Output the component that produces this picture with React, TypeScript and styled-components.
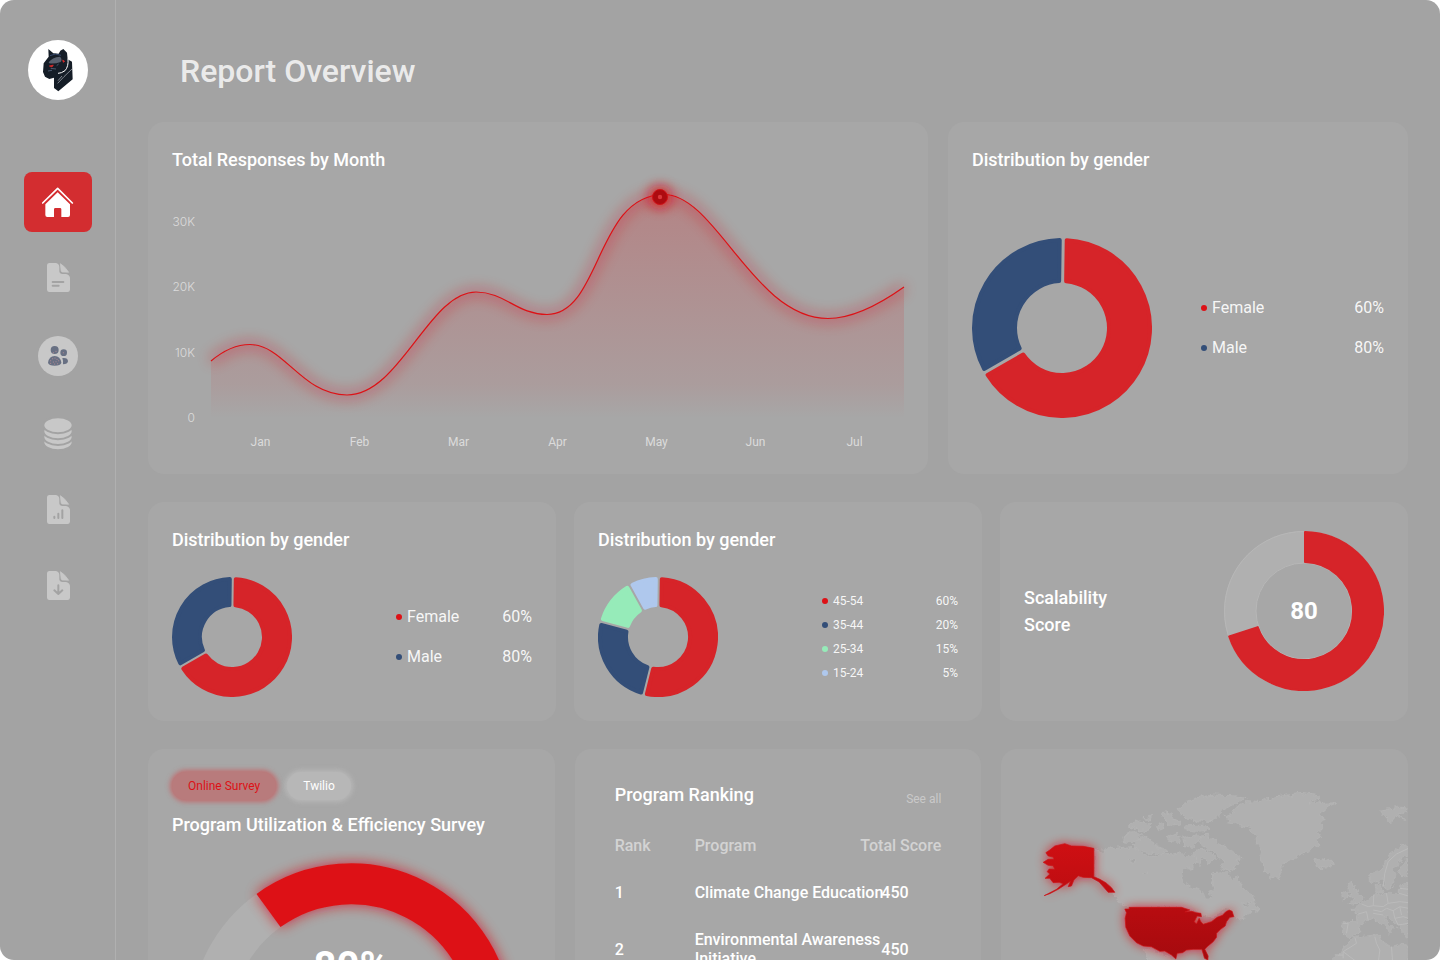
import React from "react";
import styled, { createGlobalStyle, css } from "styled-components";

const colors = {
  page: "#a3a3a3",
  card: "#a7a7a7",
  line: "#b0b0b0",
  icon: "#c8c8c8",
  red: "#d62429",
  hotRed: "#dd1116",
  blue: "#334e78",
  green: "#96ebb9",
  sky: "#afc8ed",
};

const GlobalStyle = createGlobalStyle`
  *, *::before, *::after { box-sizing: border-box; }
  body {
    margin: 0;
    background: #ffffff;
    font-family: Roboto, "Liberation Sans", sans-serif;
    color: #ffffff;
  }
`;

/* ---------- page frame ---------- */

const Frame = styled.div`
  display: flex;
  height: 100vh;
  overflow: hidden;
  border-radius: 14px;
  background: ${colors.page};
`;

const Sidebar = styled.aside`
  flex: none;
  width: 116px;
  padding: 40px 23px 40px 24px;
  display: flex;
  flex-direction: column;
  align-items: center;
  gap: 72px;
  border-right: 1px solid ${colors.line};
`;

const Logo = styled.a`
  display: block;
  width: 60px;
  height: 60px;
  border-radius: 50%;
  background: #ffffff;
  svg {
    display: block;
  }
`;

const Nav = styled.nav`
  display: flex;
  flex-direction: column;
  gap: 16px;
`;

const NavButton = styled.button<{ $active?: boolean; $tall?: boolean }>`
  display: flex;
  align-items: center;
  justify-content: center;
  width: 68px;
  height: ${(p) => (p.$tall ? 64 : 60)}px;
  padding: 0;
  border: 0;
  border-radius: 8px;
  background: ${(p) => (p.$active ? "#d32d30" : "transparent")};
  cursor: pointer;
`;

const Avatar = styled.span`
  display: flex;
  align-items: center;
  justify-content: center;
  width: 40px;
  height: 40px;
  border-radius: 50%;
  background: ${colors.icon};
`;

const Main = styled.main`
  flex: 1;
  min-width: 0;
  padding: 52px 32px 0;
`;

const PageTitle = styled.h1`
  margin: 0 0 32px;
  padding-left: 32px;
  font-size: 32px;
  line-height: 38px;
  font-weight: 500;
  color: rgba(255, 255, 255, 0.8);
`;

const Row = styled.div<{ $columns: string; $gap: number }>`
  display: grid;
  grid-template-columns: ${(p) => p.$columns};
  gap: ${(p) => p.$gap}px;
  margin-bottom: 28px;
`;

const Card = styled.section<{ $pad?: string }>`
  display: flex;
  flex-direction: column;
  min-width: 0;
  padding: ${(p) => p.$pad ?? "24px"};
  border-radius: 16px;
  background: ${colors.card};
`;

const CardTitle = styled.h2`
  margin: 0;
  font-size: 18px;
  line-height: 28px;
  font-weight: 500;
`;

/* ---------- line chart ---------- */

const ChartGrid = styled.div`
  display: grid;
  grid-template-columns: 23px 1fr;
  column-gap: 16px;
  margin-top: 4px;
`;

const AxisY = styled.div`
  display: flex;
  flex-direction: column;
  justify-content: space-between;
  height: 212px;
  margin-top: 36px;
  text-align: right;
  font-family: Inter, Roboto, sans-serif;
  font-size: 12px;
  line-height: 16px;
  font-weight: 300;
  color: rgba(255, 255, 255, 0.6);
`;

const Plot = styled.svg`
  display: block;
  width: 100%;
  height: 240px;
  overflow: visible;
`;

const AxisX = styled.div`
  grid-column: 2;
  display: grid;
  grid-template-columns: repeat(7, 1fr);
  margin-top: 8px;
  text-align: center;
  font-size: 12px;
  line-height: 16px;
  color: rgba(255, 255, 255, 0.6);
`;

const curve =
  "M211 361 C224 350 236 344.500 250 344.500 C284 344.500 302 395 347 395 C400 395 429 292 476 292 C505 292 517 314.500 547 314.500 C601 314.500 596 194.500 664 194.500 C716 194.500 754 318.500 828 318.500 C852 318.500 880 304 904 287";

function ResponsesChart() {
  return (
    <ChartGrid>
      <AxisY>
        {["30K", "20K", "10K", "0"].map((v) => (
          <span key={v}>{v}</span>
        ))}
      </AxisY>
      <Plot viewBox="211 178 693 240" preserveAspectRatio="none" aria-hidden="true">
        <defs>
          <linearGradient id="area" gradientUnits="userSpaceOnUse" x1="0" y1="195" x2="0" y2="418">
            <stop offset="0" stopColor={colors.hotRed} stopOpacity="0.23" />
            <stop offset="0.85" stopColor={colors.hotRed} stopOpacity="0.07" />
            <stop offset="1" stopColor={colors.hotRed} stopOpacity="0" />
          </linearGradient>
          <filter id="lineGlow" filterUnits="userSpaceOnUse" x="180" y="150" width="760" height="290">
            <feGaussianBlur stdDeviation="7" />
          </filter>
          <filter id="dotGlow" filterUnits="userSpaceOnUse" x="620" y="155" width="80" height="80">
            <feGaussianBlur stdDeviation="6" />
          </filter>
        </defs>
        <path d={`${curve} V418 H211Z`} fill="url(#area)" />
        <path d={curve} fill="none" stroke={colors.hotRed} strokeWidth="8" opacity="0.35" filter="url(#lineGlow)" />
        <path d={curve} fill="none" stroke={colors.hotRed} strokeWidth="1.2" />
        <circle cx="660" cy="197" r="12" fill={colors.hotRed} opacity="0.7" filter="url(#dotGlow)" />
        <circle cx="660" cy="197" r="7.5" fill="#ad0b10" stroke="#cf1318" />
        <circle cx="660" cy="197" r="2.2" fill="#d9383b" />
      </Plot>
      <AxisX>
        {["Jan", "Feb", "Mar", "Apr", "May", "Jun", "Jul"].map((m) => (
          <span key={m}>{m}</span>
        ))}
      </AxisX>
    </ChartGrid>
  );
}

/* ---------- donut charts ---------- */

type Slice = { from: number; to: number; color: string };

function slicePath(c: number, outer: number, inner: number, s: Slice, gap: number, round: number) {
  const ro = outer - round;
  const ri = inner + round;
  const pad = gap / 2 + round;
  const point = (r: number, deg: number, side: number) => {
    const a = (deg * Math.PI) / 180 + side * Math.asin(pad / r);
    return `${(c + r * Math.sin(a)).toFixed(2)} ${(c - r * Math.cos(a)).toFixed(2)}`;
  };
  const large = s.to - s.from > 180 ? 1 : 0;
  return `M${point(ro, s.from, 1)} A${ro} ${ro} 0 ${large} 1 ${point(ro, s.to, -1)} L${point(ri, s.to, -1)} A${ri} ${ri} 0 ${large} 0 ${point(ri, s.from, 1)}Z`;
}

const DonutSvg = styled.svg`
  flex: none;
  display: block;
`;

function Donut(props: { size: number; hole: number; gap: number; slices: Slice[]; round?: number; track?: boolean }) {
  const { size, hole, gap, slices, round = 2, track } = props;
  const c = size / 2;
  return (
    <DonutSvg width={size} height={size} viewBox={`0 0 ${size} ${size}`} aria-hidden="true">
      {track && (
        <g fill="none">
          <circle cx={c} cy={c} r={(c + hole) / 2} stroke="#b0b0b0" strokeWidth={c - hole} />
          <circle cx={c} cy={c} r={c - 0.5} stroke="#b7b7b7" />
          <circle cx={c} cy={c} r={hole} stroke="#b7b7b7" />
        </g>
      )}
      {slices.map((s) => (
        <path
          key={s.from}
          d={slicePath(c, c, hole, s, gap, round)}
          fill={s.color}
          stroke={s.color}
          strokeWidth={round * 2}
          strokeLinejoin="round"
        />
      ))}
    </DonutSvg>
  );
}

const genderSlices: Slice[] = [
  { from: 0.8, to: 240, color: colors.red },
  { from: 240, to: 360.8, color: colors.blue },
];

const ageSlices: Slice[] = [
  { from: 0.8, to: 194, color: colors.red },
  { from: 194, to: 285, color: colors.blue },
  { from: 285, to: 331, color: colors.green },
  { from: 331, to: 360.8, color: colors.sky },
];

const ChartBody = styled.div<{ $top: number }>`
  display: flex;
  align-items: center;
  justify-content: space-between;
  margin-top: ${(p) => p.$top}px;
`;

const LegendList = styled.ul<{ $width: number; $small?: boolean }>`
  flex: none;
  width: ${(p) => p.$width}px;
  margin: 0;
  padding: 0;
  list-style: none;
  display: flex;
  flex-direction: column;
  gap: ${(p) => (p.$small ? 8 : 20)}px;
  font-size: ${(p) => (p.$small ? 12 : 16)}px;
  line-height: ${(p) => (p.$small ? 16 : 20)}px;
  color: rgba(255, 255, 255, 0.92);
`;

const LegendItem = styled.li<{ $color: string }>`
  display: flex;
  align-items: center;
  &::before {
    content: "";
    width: 6px;
    height: 6px;
    margin: 0 5px 0 1px;
    border-radius: 50%;
    background: ${(p) => p.$color};
  }
`;

const LegendValue = styled.span`
  margin-left: auto;
`;

function Legend({ width, small, items }: { width: number; small?: boolean; items: [string, string, string][] }) {
  return (
    <LegendList $width={width} $small={small}>
      {items.map(([label, value, color]) => (
        <LegendItem key={label} $color={color}>
          {label}
          <LegendValue>{value}</LegendValue>
        </LegendItem>
      ))}
    </LegendList>
  );
}

const genderItems: [string, string, string][] = [
  ["Female", "60%", colors.hotRed],
  ["Male", "80%", colors.blue],
];

const ageItems: [string, string, string][] = [
  ["45-54", "60%", colors.hotRed],
  ["35-44", "20%", colors.blue],
  ["25-34", "15%", colors.green],
  ["15-24", "5%", colors.sky],
];

/* ---------- score ---------- */

const ScoreBody = styled.div`
  flex: 1;
  display: flex;
  align-items: center;
  justify-content: space-between;
  padding-bottom: 1px;
`;

const ScoreTitle = styled.h2`
  width: 100px;
  margin: 0;
  font-size: 18px;
  line-height: 27px;
  font-weight: 500;
`;

const Stack = styled.div`
  display: grid;
  place-items: center;
  > * {
    grid-area: 1 / 1;
  }
`;

const ScoreValue = styled.strong`
  font-size: 24px;
  line-height: 28px;
  font-weight: 700;
`;

/* ---------- survey gauge ---------- */

const Chips = styled.div`
  display: flex;
  gap: 11px;
  margin-bottom: 11px;
`;

const Chip = styled.button<{ $active?: boolean }>`
  height: 28px;
  padding: 0 16px;
  border: 0;
  border-radius: 14px;
  font: 400 12px/16px Roboto, sans-serif;
  cursor: pointer;
  ${(p) =>
    p.$active
      ? css`
          color: ${colors.hotRed};
          background: #b87b7c;
          box-shadow: 0 0 5px 2px rgba(200, 90, 92, 0.75);
        `
      : css`
          color: #ffffff;
          background: #b7b7b7;
          box-shadow: 0 0 5px 2px rgba(188, 188, 188, 0.8);
        `}
`;

const GaugeBox = styled(Stack)`
  margin-top: 3px;
  align-items: start;
`;

const GaugeSvg = styled.svg`
  display: block;
  overflow: visible;
`;

const GaugeValue = styled.strong`
  margin-top: 101px;
  font-size: 40px;
  line-height: 48px;
  font-weight: 700;
`;

function Gauge() {
  return (
    <GaugeBox>
      <GaugeSvg width="358" height="200" viewBox="1 0 358 200" aria-hidden="true">
        <defs>
          <filter id="gaugeGlow" filterUnits="userSpaceOnUse" x="0" y="8" width="360" height="220">
            <feGaussianBlur stdDeviation="7" />
          </filter>
        </defs>
        <g fill="none" strokeWidth="41">
          <path d="M39 182.500 A141 141 0 0 1 97.500 68.500" stroke="#b0b0b0" />
          <path d="M97.500 68.500 A141 141 0 0 1 321 182.500" stroke={colors.hotRed} opacity="0.75" filter="url(#gaugeGlow)" />
          <path d="M97.500 68.500 A141 141 0 0 1 321 182.500" stroke={colors.hotRed} />
        </g>
      </GaugeSvg>
      <GaugeValue>80%</GaugeValue>
    </GaugeBox>
  );
}

/* ---------- ranking ---------- */

const RankingHead = styled.div`
  display: flex;
  align-items: flex-end;
  justify-content: space-between;
`;

const SeeAll = styled.a`
  font-size: 12px;
  line-height: 20px;
  color: rgba(255, 255, 255, 0.4);
  text-decoration: none;
`;

const Table = styled.table`
  width: 100%;
  margin-top: 13px;
  table-layout: fixed;
  border-collapse: collapse;
  font-size: 16px;
  line-height: 19px;
  font-weight: 500;
  th,
  td {
    padding: 14px 0;
    text-align: left;
    white-space: nowrap;
    font-weight: 500;
  }
  th {
    color: rgba(255, 255, 255, 0.5);
  }
  td:last-child {
    padding-left: 21px;
  }
`;

const ColHead = styled.th<{ $width?: number }>`
  width: ${(p) => (p.$width ? `${p.$width}px` : "auto")};
`;

const programs: { name: string[]; score: number }[] = [
  { name: ["Climate Change Education"], score: 450 },
  { name: ["Environmental Awareness", "Initiative"], score: 450 },
];

function Ranking() {
  return (
    <Card $pad="32px 40px 24px">
      <RankingHead>
        <CardTitle>Program Ranking</CardTitle>
        <SeeAll href="#all">See all</SeeAll>
      </RankingHead>
      <Table>
        <thead>
          <tr>
            <ColHead $width={80}>Rank</ColHead>
            <ColHead>Program</ColHead>
            <ColHead $width={81}>Total Score</ColHead>
          </tr>
        </thead>
        <tbody>
          {programs.map((p, i) => (
            <tr key={p.name[0]}>
              <td>{i + 1}</td>
              <td>
                {p.name.map((line, n) => (
                  <React.Fragment key={line}>
                    {n > 0 && <br />}
                    {line}
                  </React.Fragment>
                ))}
              </td>
              <td>{p.score}</td>
            </tr>
          ))}
        </tbody>
      </Table>
    </Card>
  );
}

/* ---------- map ---------- */

const MapSvg = styled.svg`
  display: block;
  width: 100%;
  height: 300px;
`;

const land = [
  // Canada mainland
  "M287 330 L300 336 330 325 355 320 375 325 400 322 420 334 440 345 470 350 490 342 520 345 545 338 555 350 575 342 585 352 590 365 580 380 555 388 543 400 548 425 575 440 610 455 615 475 625 485 635 472 632 455 645 445 638 420 638 400 660 395 680 398 700 420 710 410 725 440 740 455 762 468 765 485 740 490 725 492 735 500 750 495 762 488 765 498 780 512 755 515 735 530 715 535 705 525 695 510 680 505 655 522 630 530 605 520 590 515 560 505 545 500 H375 L360 490 345 465 335 450 320 425 300 415 285 408Z",
  // Arctic islands
  "M600 285 L622 283 632 292 650 298 655 312 680 320 700 335 730 355 712 362 715 372 700 380 712 390 690 396 670 385 655 375 675 368 660 355 650 345 630 330 610 320 600 300Z",
  "M410 305 L430 290 450 296 462 315 490 322 505 335 490 344 450 340 418 330 400 318Z",
  "M375 285 L400 275 425 282 415 300 395 308 370 305Z",
  "M385 255 L410 240 425 246 450 250 457 262 440 272 405 268Z",
  "M430 236 L458 226 455 240Z",
  "M483 222 L510 216 515 232 545 245 540 255 515 258 495 240Z",
  "M470 260 L480 245 492 265 476 272Z",
  "M535 205 L560 185 600 172 640 165 700 167 735 175 705 193 670 208 655 225 640 245 600 243 570 240 545 225Z",
  "M555 258 L610 255 630 262 618 272 590 274 560 270Z",
  "M505 292 L530 280 540 300 520 310Z",
  "M548 292 L575 285 600 290 595 305 575 325 555 320Z",
  "M580 340 L600 325 625 335 650 355 630 368 610 350 600 380 590 366Z",
  // Greenland
  "M670 232 L700 222 695 210 745 182 780 185 800 178 830 170 865 165 900 160 950 165 957 178 925 185 965 190 1010 188 985 198 965 215 970 240 960 250 975 262 955 275 965 290 950 300 958 318 940 325 900 345 850 370 835 415 815 412 795 390 778 350 785 330 770 310 768 285 750 262 710 252 680 248 695 238Z",
  // Iceland and Svalbard
  "M945 362 L955 358 970 362 995 357 1003 368 975 385 950 378Z",
  "M1140 210 L1170 206 1200 202 1224 204 1224 215 1200 222 1215 238 1190 228 1170 248 1155 230Z",
  // Scandinavia
  "M1226 312 L1200 320 1175 338 1155 370 1150 385 1125 392 1110 405 1112 425 1130 430 1148 415 1152 430 1160 450 1175 445 1184 420 1190 400 1180 385 1195 370 1210 350 1226 345Z",
  "M1226 355 L1205 375 1198 400 1210 412 1226 408Z",
  "M1126 437 L1143 430 1150 455 1132 460Z",
  // British Isles
  "M1040 430 L1058 424 1065 445 1080 460 1090 480 1080 490 1050 492 1060 480 1048 470 1055 460 1045 450Z",
  "M1025 462 L1045 453 1048 470 1028 480Z",
  // Continental Europe
  "M1053 505 L1075 503 1085 490 1105 480 1125 465 1160 460 1198 460 1200 435 1226 428 V590 L1210 583 1200 562 1185 555 1165 528 1150 525 1160 545 1180 565 1168 584 1160 565 1135 545 1120 533 1095 545 1080 562 1075 580 1050 590 1030 582 1030 543 1070 545 1075 522Z",
  // North Africa
  "M995 662 L1020 640 1040 610 1060 592 1100 588 1140 583 1145 605 1175 620 1200 612 1226 616 V760 H985Z",
  // Mexico
  "M430 628 L470 634 500 648 528 665 540 760 H500 L450 670Z",
];

const borders =
  "M1150 440 L1155 400 1165 365 1190 342 1226 325 M1030 550 L1045 550 1040 580 M1075 522 L1100 515 1105 540 M1085 492 L1105 500 1120 497 1122 465 M1160 460 L1165 490 1150 500 1120 497 M1165 490 L1200 485 1226 488 M1120 510 L1145 515 1160 505 1180 512 1200 500 1226 505 M1120 520 L1150 525 M1180 512 L1185 535 1210 530 1226 535 M1200 500 L1205 525 M1185 535 L1195 555 1226 550 M1200 445 L1226 448 M1198 460 L1226 468 M1065 592 L1070 610 1030 635 1030 655 M1030 635 L1090 680 M1125 590 L1130 610 1140 630 1135 670 M1175 620 L1178 660 M1005 645 H1030";

const alaska =
  "M150 330 L165 318 195 311 215 318 250 319 282 325 V410 L300 418 318 428 335 443 345 457 325 457 312 442 298 426 275 413 250 412 235 407 222 420 215 438 205 440 212 424 195 435 175 448 150 461 133 467 170 448 190 431 178 427 160 428 150 415 136 415 150 402 142 395 148 387 165 388 160 377 145 376 130 367 145 358 163 358 160 351 145 348 138 338Z";

const usa =
  "M375 507 L388 507 388 502 H545 L570 510 555 516 575 514 590 518 603 520 605 530 592 528 583 545 590 552 598 535 603 545 610 553 635 545 652 532 668 526 678 515 688 510 697 514 702 530 690 532 680 545 676 558 662 568 650 580 650 592 640 605 622 620 615 628 625 648 624 660 614 655 606 628 580 628 560 630 548 638 532 640 528 657 515 645 495 633 480 634 455 620 430 618 410 608 390 588 378 562 376 535 380 518Z";

function WorldMap() {
  return (
    <MapSvg viewBox="3 27 1221 900" preserveAspectRatio="xMidYMin slice" role="img" aria-label="Responses by country">
      <defs>
        <linearGradient id="heat" gradientUnits="userSpaceOnUse" x1="0" y1="310" x2="0" y2="660">
          <stop offset="0" stopColor="#cf0f13" />
          <stop offset="1" stopColor="#a50a0e" />
        </linearGradient>
        <filter id="mapGlow" filterUnits="userSpaceOnUse" x="60" y="240" width="740" height="520">
          <feGaussianBlur stdDeviation="16" />
        </filter>
        <filter id="coast" filterUnits="userSpaceOnUse" x="3" y="27" width="1221" height="900">
          <feTurbulence type="fractalNoise" baseFrequency="0.06" numOctaves="3" seed="4" result="noise" />
          <feDisplacementMap in="SourceGraphic" in2="noise" scale="22" xChannelSelector="R" yChannelSelector="G" />
        </filter>
      </defs>
      <g fill="#b0b0b0" stroke="#b7b7b7" strokeWidth="2" strokeLinejoin="round">
        <g filter="url(#coast)">
          {land.map((d) => (
            <path key={d} d={d} />
          ))}
          <path d="M388 362 L400 355 412 362 400 370Z M425 402 L440 396 448 399 434 404Z" fill={colors.card} />
        </g>
        <path d={borders} fill="none" stroke="#bbbbbb" strokeWidth="3" />
      </g>
      <path d={alaska + usa} fill={colors.hotRed} opacity="0.8" filter="url(#mapGlow)" />
      <path d={alaska + usa} fill="url(#heat)" stroke="#cd1216" strokeWidth="2" />
    </MapSvg>
  );
}

/* ---------- icons ---------- */

function PantherLogo() {
  return (
    <svg width="60" height="60" viewBox="84 120 180 180" aria-hidden="true">
      <path
        d="M145 147 L160 160 176 161 181 152 190 147 201 158 203 178 216 185 218 238 175 274 162 264 162 233 148 237 135 230 129 216 131 190 146 170Z"
        fill="#151d27"
      />
      <path d="M146 187 Q156 172 180 170 Q188 178 182 186 Q165 192 148 190Z" fill="#59616f" />
      <path d="M150 167 Q165 158 183 166" fill="none" stroke="#34466b" strokeWidth="3" />
      <path d="M204 176 Q206 200 195 212 Q184 220 174 220" fill="none" stroke="#ffffff" strokeWidth="3" />
      <path d="M173 250 L192 230 216 207 M174 242 L186 228" fill="none" stroke="#b9bec6" strokeWidth="2" />
      <path d="M148 198 L160 195 156 201Z M188 180 L194 184 190 187Z" fill="#e22b2b" stroke="#e22b2b" strokeWidth="2" />
      <path d="M144 213 L156 211 M152 205 L168 207 M170 197 L176 192" stroke="#4c5a70" strokeWidth="3" />
    </svg>
  );
}

function HomeIcon() {
  return (
    <svg width="32" height="32" viewBox="126 558 96 96" aria-hidden="true">
      <path d="M128 609 L173 565 217 609" fill="none" stroke="#fff" strokeWidth="5" strokeLinecap="round" strokeLinejoin="round" />
      <path
        d="M173 577 L210 613 V645 Q210 651 204 651 H184 V628 Q184 624 180 624 H166 Q162 624 162 628 V651 H142 Q136 651 136 645 V613Z"
        fill="#fff"
      />
    </svg>
  );
}

function DocIcon({ children }: { children: React.ReactNode }) {
  return (
    <svg width="24" height="30" viewBox="138 69 72 90" overflow="visible" aria-hidden="true">
      <path
        d="M147 69 H168 Q177 71 178 80 V94 Q179 102 187 102 H198 Q208 104 210 113 V149 Q209 156 203 156 H147 Q141 155 141 149 V76 Q141 70 147 69Z"
        fill={colors.icon}
      />
      <path d="M181 71 Q195 79 206 97 Q196 96 186 96 Q183 94 183 90Z" fill={colors.icon} stroke={colors.icon} strokeWidth="2" />
      <g fill="none" stroke={colors.page} strokeWidth="6" strokeLinecap="round" strokeLinejoin="round">
        {children}
      </g>
    </svg>
  );
}

function PeopleIcon() {
  return (
    <svg width="22" height="22" viewBox="141 315 66 66" aria-hidden="true">
      <g fill="#687083">
        <circle cx="164" cy="330" r="12" />
        <circle cx="191" cy="338" r="10" />
        <path d="M144 368 Q147 348 164 348 Q181 348 184 368 Q182 377 164 377 Q146 377 144 368Z" />
        <path d="M187 354 Q204 352 204 364 Q203 373 189 373 Q190 362 187 354Z" />
      </g>
      <g fill="#c99097">
        {[
          [160, 338], [168, 334], [190, 338], [152, 362], [158, 356], [165, 354], [171, 358], [160, 366], [168, 365], [176, 362], [152, 370], [164, 372], [173, 371],
        ].map(([x, y]) => (
          <circle key={`${x}-${y}`} cx={x} cy={y} r="1.500" />
        ))}
      </g>
    </svg>
  );
}

function DatabaseIcon() {
  return (
    <svg width="30" height="34" viewBox="129 531 90 102" aria-hidden="true">
      <g fill={colors.icon} stroke={colors.page} strokeWidth="6">
        {[607, 591, 574, 556].map((cy) => (
          <ellipse key={cy} cx="174" cy={cy} rx="44" ry="24" />
        ))}
      </g>
    </svg>
  );
}

/* ---------- page ---------- */

export default function App() {
  return (
    <>
      <GlobalStyle />
      <Frame>
        <Sidebar>
          <Logo href="#home" aria-label="Home page">
            <PantherLogo />
          </Logo>
          <Nav aria-label="Main">
            <NavButton $active aria-label="Overview">
              <HomeIcon />
            </NavButton>
            <NavButton aria-label="Documents">
              <DocIcon>
                <path d="M158 126 H190 M158 137 H176" />
              </DocIcon>
            </NavButton>
            <NavButton $tall aria-label="People">
              <Avatar>
                <PeopleIcon />
              </Avatar>
            </NavButton>
            <NavButton aria-label="Data">
              <DatabaseIcon />
            </NavButton>
            <NavButton aria-label="Reports">
              <DocIcon>
                <path d="M163 134 V138 M175 125 V138 M187 115 V138" />
              </DocIcon>
            </NavButton>
            <NavButton aria-label="Downloads">
              <DocIcon>
                <path d="M175 112 V138 M163 127 L175 138 187 127" />
              </DocIcon>
            </NavButton>
          </Nav>
        </Sidebar>

        <Main>
          <PageTitle>Report Overview</PageTitle>

          <Row $columns="780fr 460fr" $gap={20}>
            <Card>
              <CardTitle>Total Responses by Month</CardTitle>
              <ResponsesChart />
            </Card>
            <Card>
              <CardTitle>Distribution by gender</CardTitle>
              <ChartBody $top={64}>
                <Donut size={180} hole={45} gap={3} slices={genderSlices} />
                <Legend width={184} items={genderItems} />
              </ChartBody>
            </Card>
          </Row>

          <Row $columns="repeat(3, 1fr)" $gap={18}>
            <Card>
              <CardTitle>Distribution by gender</CardTitle>
              <ChartBody $top={23}>
                <Donut size={120} hole={30} gap={2} slices={genderSlices} />
                <Legend width={137} items={genderItems} />
              </ChartBody>
            </Card>
            <Card>
              <CardTitle>Distribution by gender</CardTitle>
              <ChartBody $top={23}>
                <Donut size={120} hole={30} gap={2} slices={ageSlices} />
                <Legend width={137} small items={ageItems} />
              </ChartBody>
            </Card>
            <Card>
              <ScoreBody>
                <ScoreTitle>Scalability Score</ScoreTitle>
                <Stack>
                  <Donut size={160} hole={48} gap={0} round={1} track slices={[{ from: 0, to: 252, color: colors.red }]} />
                  <ScoreValue>80</ScoreValue>
                </Stack>
              </ScoreBody>
            </Card>
          </Row>

          <Row $columns="repeat(3, 1fr)" $gap={20}>
            <Card $pad="23px 24px">
              <Chips>
                <Chip $active>Online Survey</Chip>
                <Chip>Twilio</Chip>
              </Chips>
              <CardTitle>Program Utilization &amp; Efficiency Survey</CardTitle>
              <Gauge />
            </Card>
            <Ranking />
            <Card $pad="0">
              <WorldMap />
            </Card>
          </Row>
        </Main>
      </Frame>
    </>
  );
}
